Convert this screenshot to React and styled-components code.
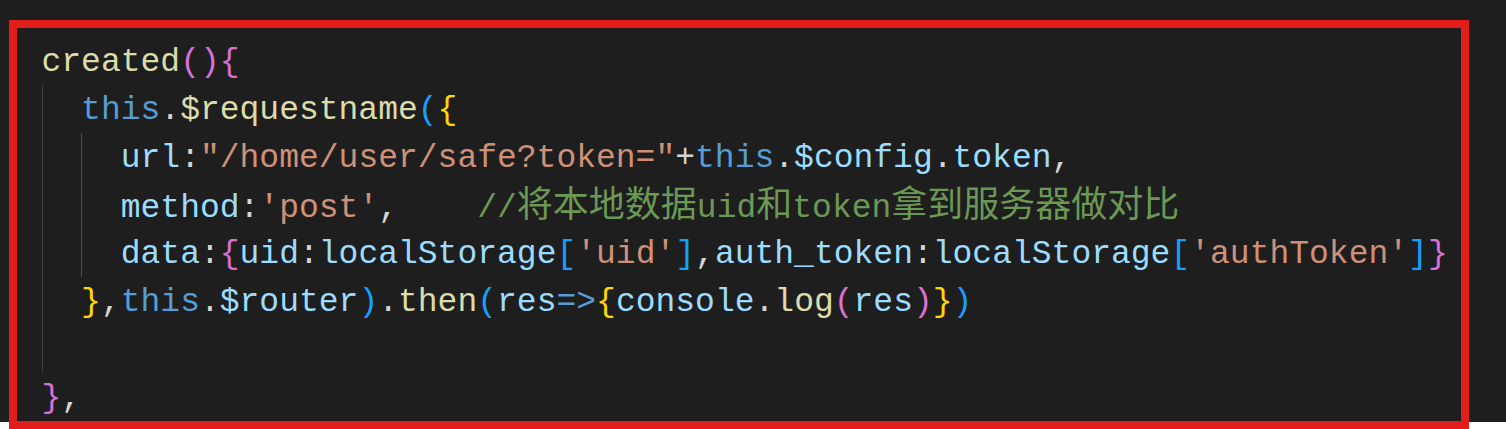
import React from 'react';
import styled, { createGlobalStyle } from 'styled-components';

const Global = createGlobalStyle`
	html, body {
		margin: 0;
		padding: 0;
		background: #ffffff;
	}
`;

const Page = styled.div`
	position: relative;
	width: 1506px;
	height: 429px;
	overflow: hidden;
`;

const Editor = styled.div`
	background: #1e1e1e;
	height: 422px;
	padding: 37px 0 0 41.5px;
	box-sizing: border-box;
	font-family: 'Liberation Mono', 'DejaVu Sans Mono', monospace;
	font-size: 33px;
	color: #d4d4d4;
`;

const Line = styled.div`
	height: 48px;
	line-height: 48px;
	white-space: pre;
	padding-top: 2px;
	box-sizing: border-box;
`;

const Block = styled.div`
	background-image: linear-gradient(${(p) => p.$guide}, ${(p) => p.$guide});
	background-repeat: no-repeat;
	background-size: 1px 100%;
	background-position: ${(p) => p.$col * 19.8}px 0;
`;

const Fn = styled.span`
	color: #dcdcaa;
`;
const Kw = styled.span`
	color: #569cd6;
`;
const Var = styled.span`
	color: #9cdcfe;
`;
const Str = styled.span`
	color: #ce9178;
`;
const Cmt = styled.span`
	color: #6a9955;
`;
const Cjk = styled.span`
	font-family: 'Noto Sans CJK SC', sans-serif;
	font-size: 36px;
	line-height: 1;
`;

const bracketColors = { 1: '#ffd700', 2: '#da70d6', 3: '#179fff' };
const Br = styled.span`
	color: ${(p) => bracketColors[p.$level]};
`;

// red annotation frame drawn over the screenshot
const Frame = styled.div`
	position: absolute;
	left: 9px;
	top: 20px;
	width: 1460px;
	height: 409px;
	border: 8px solid #e31c1c;
	box-sizing: border-box;
	pointer-events: none;
`;

const App = () => {
	return (
		<Page>
			<Global />
			<Editor>
				<Line>
					<Fn>created</Fn>
					<Br $level={2}>()</Br>
					<Br $level={2}>{'{'}</Br>
				</Line>
				<Block $col={0} $guide='#404040'>
					<Line>
						{'  '}
						<Kw>this</Kw>.<Fn>$requestname</Fn>
						<Br $level={3}>(</Br>
						<Br $level={1}>{'{'}</Br>
					</Line>
					<Block $col={2} $guide='#4a4a4a'>
						<Line>
							{'    '}
							<Var>url</Var>:<Str>"/home/user/safe?token="</Str>+<Kw>this</Kw>.
							<Var>$config</Var>.<Var>token</Var>,
						</Line>
						<Line>
							{'    '}
							<Var>method</Var>:<Str>'post'</Str>,{'    '}
							<Cmt>
								//<Cjk>将本地数据</Cjk>uid<Cjk>和</Cjk>token<Cjk>拿到服务器做对比</Cjk>
							</Cmt>
						</Line>
						<Line>
							{'    '}
							<Var>data</Var>:<Br $level={2}>{'{'}</Br>
							<Var>uid</Var>:<Var>localStorage</Var>
							<Br $level={3}>[</Br>
							<Str>'uid'</Str>
							<Br $level={3}>]</Br>,<Var>auth_token</Var>:<Var>localStorage</Var>
							<Br $level={3}>[</Br>
							<Str>'authToken'</Str>
							<Br $level={3}>]</Br>
							<Br $level={2}>{'}'}</Br>
						</Line>
					</Block>
					<Line>
						{'  '}
						<Br $level={1}>{'}'}</Br>,<Kw>this</Kw>.<Var>$router</Var>
						<Br $level={3}>)</Br>.<Fn>then</Fn>
						<Br $level={3}>(</Br>
						<Var>res</Var>
						<Kw>{'=>'}</Kw>
						<Br $level={1}>{'{'}</Br>
						<Var>console</Var>.<Fn>log</Fn>
						<Br $level={2}>(</Br>
						<Var>res</Var>
						<Br $level={2}>)</Br>
						<Br $level={1}>{'}'}</Br>
						<Br $level={3}>)</Br>
					</Line>
					<Line />
				</Block>
				<Line>
					<Br $level={2}>{'}'}</Br>,
				</Line>
			</Editor>
			<Frame />
		</Page>
	);
};

export default App;
